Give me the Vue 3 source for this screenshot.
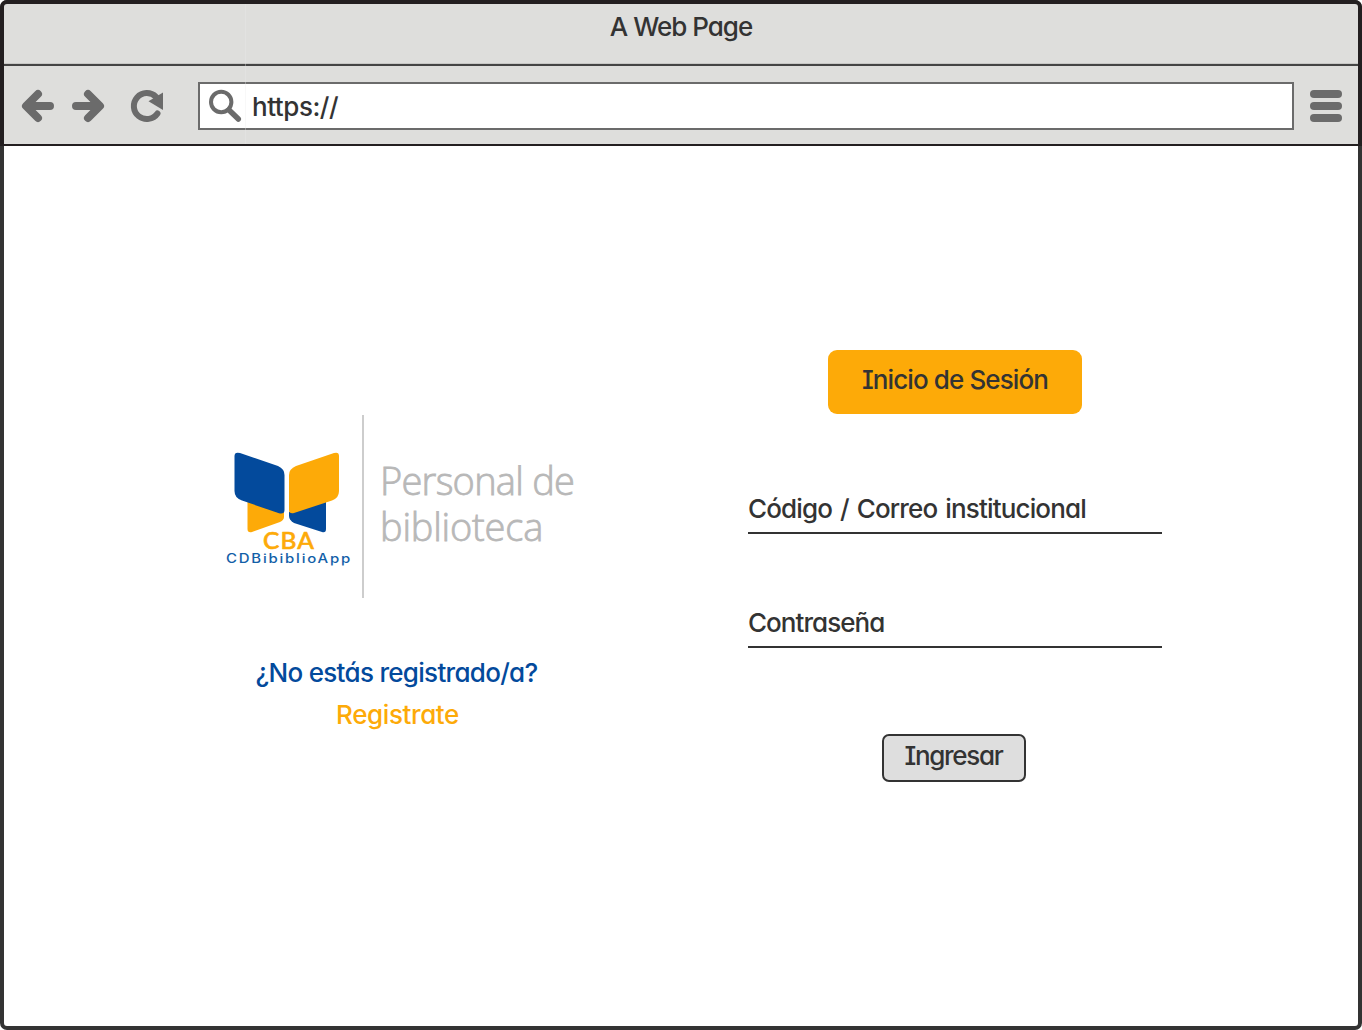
<script setup>
import { ref } from 'vue'

const title = ref('A Web Page')
const address = ref('https://')
const fields = [
  { id: 'user', label: 'Código / Correo institucional', cls: 'field-user' },
  { id: 'password', label: 'Contraseña', cls: 'field-pass' }
]
</script>

<template>
  <div class="window">
    <header class="chrome">
      <div class="titlebar"><span class="t-title">{{ title }}</span></div>
      <nav class="toolbar">
        <svg class="nav-icons" width="160" height="40" viewBox="0 0 160 40">
          <g fill="none" stroke="#6b6b6b" stroke-width="8" stroke-linecap="round" stroke-linejoin="round">
            <path d="M46 20H24M34 8L22 20L34 32" />
            <path d="M72 20H94M84 8L96 20L84 32" />
            <path d="M153.500 27.500A13 13 0 1 1 152 10.800" stroke-width="6" />
          </g>
          <path d="M22 16L18 20L22 24H30V16ZM96 16L100 20L96 24H88V16Z" fill="#6b6b6b" />
          <path d="M159 6.500V24L144.500 15.300Z" fill="#6b6b6b" />
        </svg>
        <div class="address">
          <svg class="search" width="36" height="36" viewBox="0 0 36 36" fill="none" stroke="#6b6b6b">
            <circle cx="14.200" cy="14" r="10.200" stroke-width="4" />
            <path d="M22 22L31.300 31" stroke-width="5.500" stroke-linecap="round" />
          </svg>
          <span class="t-url">{{ address }}</span>
        </div>
        <div class="menu"><i></i><i></i><i></i></div>
      </nav>
    </header>

    <main class="page">
      <section class="brand">
        <div class="brand-row">
          <svg class="logo" width="140" height="140" viewBox="0 0 140 140">
            <path d="M27.500 62H64V77Q64 80 60 82L32 92Q27.500 93 27.500 89Z" fill="#fdaa08" />
            <path d="M69 72L106 60V89Q106 93 102 92L74 83Q69 80 69 76Z" fill="#034a9c" />
            <path d="M20 13L58 26Q64.500 29 64.500 35V70Q64.500 74.500 59 73.300L22 60.500Q14.500 58 14.500 51V16Q14.500 11.500 20 13Z" fill="#034a9c" />
            <path d="M114 13L76 26Q69 29 69 35V70Q69 74 74 73L112 60.500Q119 58 119 51V16Q119 11.500 114 13Z" fill="#fdaa08" />
            <text x="43" y="108.700" textLength="52" lengthAdjust="spacingAndGlyphs" class="logo-cba">CBA</text>
            <text x="6" y="123.300" textLength="126" lengthAdjust="spacingAndGlyphs" class="logo-name">CDBibiblioApp</text>
          </svg>
          <div class="rule"></div>
          <div class="role"><span class="r1">Personal de</span><span class="r2">biblioteca</span></div>
        </div>
        <p class="ask">¿No estás registrado/a?</p>
        <a class="register">Registrate</a>
      </section>

      <section class="login">
        <h1 class="heading"><span>Inicio de Sesión</span></h1>
        <div v-for="f in fields" :key="f.id" class="field" :class="f.cls">
          <span>{{ f.label }}</span>
        </div>
        <button class="enter"><span>Ingresar</span></button>
      </section>
    </main>
  </div>
</template>

<style>
body {
  margin: 0;
  background: #fff;
}
</style>

<style scoped>
.window {
  box-sizing: border-box;
  width: 1362px;
  height: 1030px;
  border: 4px solid #333;
  border-radius: 7px;
  background: #fff;
  color: #333;
  font-family: Inter, "Liberation Sans", sans-serif;
  font-size: 26px;
  font-weight: 500;
  line-height: 32px;
  font-feature-settings: "cv11", "cv08", "calt" 0;
  white-space: nowrap;
}
.chrome {
  position: relative;
  box-sizing: border-box;
  width: 1362px;
  height: 146px;
  margin: -4px 0 0 -4px;
  border: 4px solid #231f20;
  border-bottom-width: 2px;
  border-radius: 7px 7px 0 0;
  background: #dededc;
}
.chrome::after {
  content: "";
  position: absolute;
  left: 241px;
  top: 0;
  width: 1px;
  height: 140px;
  background: rgba(236, 236, 236, 0.35);
}
.titlebar {
  box-sizing: border-box;
  height: 62px;
  padding-top: 7px;
  border-bottom: 2px solid #444;
  box-shadow: inset 0 -1px #c8c8c6;
  text-align: center;
  letter-spacing: -1px;
}
.toolbar {
  display: flex;
  height: 78px;
}
.nav-icons {
  margin-top: 20px;
}
.address {
  box-sizing: border-box;
  display: flex;
  width: 1096px;
  height: 48px;
  margin: 16px 0 0 34px;
  border: 2px solid #6b6b6b;
  background: #fff;
}
.search {
  margin: 4px 0 0 7px;
}
.t-url {
  margin: 7px 0 0 9px;
  letter-spacing: -0.45px;
}
.menu {
  display: flex;
  flex-direction: column;
  gap: 4px;
  margin: 24px 0 0 16px;
}
.menu i {
  width: 32px;
  height: 8px;
  border-radius: 4px;
  background: #6b6b6b;
}
.page {
  display: flex;
}
.brand {
  width: 356px;
  margin: 269px 0 0 216px;
  text-align: center;
}
.brand-row {
  display: flex;
  height: 183px;
}
.logo {
  flex: none;
  margin-top: 25px;
}
.logo-cba {
  font: 500 22.500px Lato, sans-serif;
  letter-spacing: 1px;
  fill: #fdaa08;
  stroke: #fdaa08;
  stroke-width: 0.6px;
  stroke-linejoin: round;
}
.logo-name {
  font: 500 12.500px Inter, sans-serif;
  letter-spacing: 1.5px;
  fill: #1260a8;
}
.rule {
  flex: none;
  width: 2px;
  margin: 0 16px 0 2px;
  background: #cdcdcd;
}
.role {
  display: flex;
  flex-direction: column;
  margin-top: 42px;
  font: 300 38px/46px "Open Sans", "Noto Sans", sans-serif;
  color: #b8b8b8;
  -webkit-text-stroke: 0.8px #b8b8b8;
  text-align: left;
}
.r1 {
  letter-spacing: -0.75px;
}
.r2 {
  letter-spacing: -0.2px;
}
.ask {
  margin: 59px 0 0 -3px;
  color: #034a9c;
  letter-spacing: -0.7px;
}
.register {
  display: block;
  margin: 10px 0 0 -1px;
  color: #fdaa08;
  letter-spacing: -0.4px;
}
.login {
  display: flex;
  flex-direction: column;
  align-items: center;
  width: 414px;
  margin: 204px 0 0 172px;
}
.heading {
  box-sizing: border-box;
  width: 254px;
  height: 64px;
  margin: 0;
  padding-top: 14px;
  border-radius: 9px;
  background: #fdaa08;
  font: inherit;
  font-feature-settings: inherit;
  letter-spacing: -0.9px;
  text-align: center;
}
.field {
  box-sizing: border-box;
  width: 414px;
  height: 40px;
  border-bottom: 2px solid #333;
  line-height: 30px;
}
.field-user {
  margin-top: 80px;
  letter-spacing: -0.84px;
  word-spacing: 1.8px;
}
.field-pass {
  margin-top: 74px;
  letter-spacing: -0.95px;
}
.enter {
  box-sizing: border-box;
  width: 144px;
  height: 48px;
  margin: 86px 2px 0 0;
  padding: 0 1px 4px 0;
  border: 2px solid #333;
  border-radius: 7px;
  background: #dedede;
  color: inherit;
  font: inherit;
  font-feature-settings: inherit;
  letter-spacing: -1.3px;
}
</style>
